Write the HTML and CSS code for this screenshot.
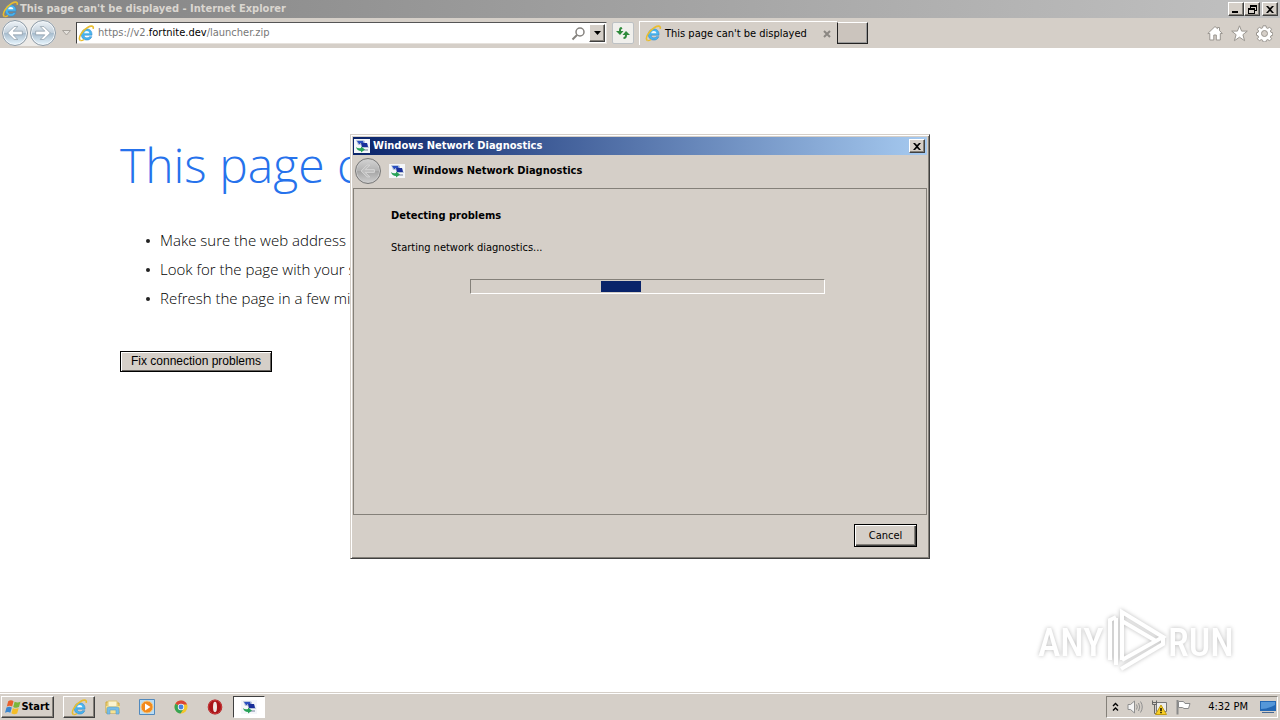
FILE: index.html
```html
<!DOCTYPE html>
<html lang="en">
<head>
    <meta charset="UTF-8">
    <meta name="viewport" content="width=device-width, initial-scale=1.0">
    <title>This page can't be displayed</title>
    <link rel="stylesheet" href="styles.css">
</head>
<body>
    <!-- Shared icons -->
    <svg class="sprite" aria-hidden="true">
        <symbol id="ie" viewBox="0 0 16 16">
            <path d="M13.2 9.6H5.7c.2 1.7 1.3 2.5 2.7 2.5 1.100 0 1.800-.4 2.300-1.100h2.300c-.8 2-2.500 3.200-4.700 3.200-3.200 0-5.200-2.200-5.200-5.200s2.100-5.300 5.200-5.300c3.300 0 5.100 2.300 4.900 5.900z" fill="#49b4ee" stroke="#2c86cc" stroke-width=".5"/>
            <path d="M5.800 7.800h4.900c-.2-1.400-1.100-2.100-2.400-2.100S6.100 6.400 5.800 7.800z" fill="#f3fbff"/>
            <path d="M2.300 14.600C-.6 12.800 3.800 5.200 9 2.300c3.300-1.900 6-1.800 5.300 1.300" fill="none" stroke="#e9bd2f" stroke-width="1.500"/>
            <path d="M2.300 14.600c1 .4 2.300-.2 3.400-1" fill="none" stroke="#e9bd2f" stroke-width="1.200"/>
        </symbol>
        <symbol id="net" viewBox="0 0 16 14">
            <path d="M0 0h16v14H0z" fill="#f4f6fa"/>
            <path d="M2 1h7l2 1v4H4z" fill="#b9c6dc"/>
            <path d="M3 2h6l1 3H5z" fill="#2a4fc0"/>
            <path d="M6 4h7l2 5H8z" fill="#b8c4d8"/>
            <path d="M7 4h6l1 4H8z" fill="#1a2f9a"/>
            <path d="M9 10h5v2H9z" fill="#b3bccb"/>
            <path d="M2 8q2 2 5 1V7.500l4 3-4 3V12Q3 12 2 8z" fill="#27a257"/>
        </symbol>
        <symbol id="cross" viewBox="0 0 8 7">
            <path d="M0 0h2l2 2 2-2h2L5 3.500 8 7H6L4 5 2 7H0l3-3.500z" fill="currentColor"/>
        </symbol>
    </svg>

    <header class="titlebar">
        <svg class="icon"><use href="#ie"/></svg>
        <span class="titlebar-text">This page can't be displayed - Internet Explorer</span>
        <div class="window-buttons">
            <button class="win-btn" aria-label="Minimize"><svg width="8" height="7"><path d="M0 5h6v2H0z"/></svg></button>
            <button class="win-btn" aria-label="Restore"><svg width="9" height="9"><path d="M2 0h7v6H7V5h1V2H3v1H2zM0 3h7v6H0zm1 2v3h5V5z" fill-rule="evenodd"/></svg></button>
            <button class="win-btn close" aria-label="Close"><svg width="8" height="7"><use href="#cross"/></svg></button>
        </div>
    </header>

    <nav class="toolbar">
        <div class="history">
            <button class="round" aria-label="Back"><svg viewBox="0 0 24 24"><path d="M11 5 4 12l7 7h4l-5-5h10v-4H10l5-5z" fill="#fff" stroke="#8a99a6" stroke-width=".8"/></svg></button>
            <button class="round" aria-label="Forward"><svg viewBox="0 0 24 24"><path d="M13 5l7 7-7 7H9l5-5H4v-4h10L9 5z" fill="#fff" stroke="#8a99a6" stroke-width=".8"/></svg></button>
        </div>
        <button class="plain recent" aria-label="Recent pages"><svg width="9" height="6"><path d="M.5.5h8l-4 4.500z" fill="#e4e1dc" stroke="#a5a19b"/></svg></button>
        <div class="address">
            <svg class="icon"><use href="#ie"/></svg>
            <a class="url" href="#">https://v2.<b>fortnite.dev</b>/launcher.zip</a>
            <button class="plain" aria-label="Search"><svg width="15" height="15"><circle cx="9" cy="6" r="4" fill="none" stroke="#85827e" stroke-width="1.500"/><path d="M6 9l-4.500 4.500" stroke="#85827e" stroke-width="2"/></svg></button>
            <button class="win-btn drop" aria-label="Show addresses"><svg width="7" height="4"><path d="M0 0h7L3.500 4z"/></svg></button>
        </div>
        <button class="refresh" aria-label="Refresh"><svg width="16" height="16"><path d="M6.500 2C4.500 2 4 3.500 4 6H1l4 4 3.500-4H6c0-1.500 0-2 1.500-2zM8.500 14c2.500 0 3.500-1.500 3.500-4h3l-4-4-3.500 4H10c0 1.500-.5 2-1.500 2z" fill="#2f8a3c"/></svg></button>
        <div class="tab">
            <svg class="icon"><use href="#ie"/></svg>
            <span class="tab-text">This page can't be displayed</span>
            <button class="plain tab-close" aria-label="Close tab"><svg width="8" height="8"><path d="M1 1l6 6M7 1L1 7" stroke="currentColor" stroke-width="2"/></svg></button>
        </div>
        <button class="new-tab" aria-label="New tab"></button>
        <div class="tools">
            <button class="plain" aria-label="Home"><svg width="16" height="16"><path d="M8 1.500.8 8.500h2V15h4v-5h2.500v5h4V8.500h2L12.500 5.500V2.500h-2v1.200z" fill="#fff" stroke="#99958f"/></svg></button>
            <button class="plain" aria-label="Favorites"><svg width="17" height="17"><path d="M8.500.8l2.100 5.300h5.700l-4.400 3.600 1.700 6-5.100-3.500-5.100 3.500 1.700-6L.7 6.100h5.700z" fill="#fff" stroke="#99958f"/></svg></button>
            <button class="plain" aria-label="Tools"><svg width="17" height="17" viewBox="0 0 17 17"><path d="M7 .8h3l.4 2 1.400.6 1.800-1.200 2 2-1.200 1.800.6 1.400 1.700.3v2.600l-1.700.4-.6 1.400 1.200 1.700-2 2-1.800-1.200-1.400.6-.4 1.700H7l-.4-1.700-1.400-.6-1.800 1.200-2-2 1.200-1.700-.6-1.400-1.500-.4V7.700L2 7.400 2.600 6 1.400 4.200l2-2 1.800 1.200 1.400-.6z" fill="#fff" stroke="#99958f"/><circle cx="8.500" cy="8.500" r="3" fill="#d5cfc8" stroke="#99958f"/></svg></button>
        </div>
    </nav>

    <main class="page">
        <h1>This page can't be displayed</h1>
        <ul>
            <li>Make sure the web address https://v2.fortnite.dev is correct.</li>
            <li>Look for the page with your search engine.</li>
            <li>Refresh the page in a few minutes.</li>
        </ul>
        <button class="fix">Fix connection problems</button>
    </main>

    <svg class="watermark" viewBox="0 0 200 64" aria-label="ANY RUN">
        <g class="mark">
            <text x="0" y="48">ANY</text>
            <text x="130" y="48">RUN</text>
            <path d="M72 52V12l6-3M84 52V4l41 25-41 23M84 13l34 20M78 57V10M83 61l42-25v-6"/>
        </g>
    </svg>

    <!-- Diagnostics dialog -->
    <section class="dialog" role="dialog" aria-label="Windows Network Diagnostics">
        <div class="dialog-title">
            <svg class="net"><use href="#net"/></svg>
            <span>Windows Network Diagnostics</span>
            <button class="win-btn close" aria-label="Close"><svg width="8" height="7"><use href="#cross"/></svg></button>
        </div>
        <div class="dialog-head">
            <button class="round gray" aria-label="Back" disabled><svg viewBox="0 0 24 24"><path d="M11 5.500 4.500 12l6.500 6.500h3l-5-5h10v-3H9l5-5z" fill="#bdbdbd" stroke="#d6d6d6"/></svg></button>
            <svg class="net"><use href="#net"/></svg>
            <span>Windows Network Diagnostics</span>
        </div>
        <div class="dialog-body">
            <h2>Detecting problems</h2>
            <p>Starting network diagnostics...</p>
            <div class="progress" role="progressbar" aria-label="Progress"><div class="chunk"></div></div>
        </div>
        <div class="dialog-foot">
            <button class="cancel">Cancel</button>
        </div>
    </section>

    <footer class="taskbar">
        <button class="start">
            <svg width="16" height="16" viewBox="0 0 15 15"><path d="M3 2c2-1.300 3.500-1 5 0L6.700 7C5 6 3.700 6 1.700 7z" fill="#e8602c"/><path d="M9 2.500c2 1 3.500 1 5.500 0l-1.400 5c-2 1-3.600.9-5.400-.1z" fill="#7ab63c"/><path d="M1.400 8c2-1.200 3.500-1 5 0L5 13c-1.600-1-3-1-5 0z" fill="#3a86d0"/><path d="M7.400 8.400c1.800 1.100 3.500 1 5.400.1l-1.400 5c-2 1-3.600.9-5.400-.1z" fill="#f4bd27"/></svg>
            <span>Start</span>
        </button>
        <button class="task raised" aria-label="Internet Explorer"><svg class="icon"><use href="#ie"/></svg></button>
        <button class="task" aria-label="Explorer"><svg width="16" height="16"><path d="M1 3h5l1 1h7v10H1z" fill="#f0d478" stroke="#cda83d"/><path d="M3 2h9v6H3z" fill="#fbf4cf" stroke="#ddc677"/><path d="M1 7h14l-1 7H2z" fill="#f6e291"/><path d="M2 15V9.500Q2 8 4 8h8q2 0 2 1.500V15h-3v-4H5v4z" fill="#75bde6" stroke="#5b9fca" stroke-width=".6"/></svg></button>
        <button class="task" aria-label="Media Player"><svg width="16" height="16"><path d="M.5.5h15v15H.5z" fill="#b9dcf4" stroke="#5189bd"/><circle cx="8" cy="8" r="6" fill="#f28a1c" stroke="#f8c77c"/><path d="M6 4.500v7L11.500 8z" fill="#fff"/></svg></button>
        <button class="task" aria-label="Chrome"><svg width="16" height="16"><circle cx="8" cy="8" r="6.500" fill="#f4c62b"/><path d="M8 8 2.400 4.700A6.500 6.500 0 0 1 14 5.500H8z" fill="#da4437"/><path d="M8 8 2.400 4.700A6.500 6.500 0 0 0 7.500 14.500l3-4.500z" fill="#36a455"/><circle cx="8" cy="8" r="3.200" fill="#f5f5f5"/><circle cx="8" cy="8" r="2.400" fill="#4781df"/></svg></button>
        <button class="task" aria-label="Opera"><svg width="16" height="16"><ellipse cx="8" cy="8" rx="7.300" ry="7.500" fill="#a81418"/><ellipse cx="8" cy="8" rx="6.500" ry="6.800" fill="none" stroke="#d04545" stroke-width=".8"/><ellipse cx="8" cy="8" rx="2" ry="5.200" fill="#efe7e3"/></svg></button>
        <button class="task pressed" aria-label="Windows Network Diagnostics"><svg class="net"><use href="#net"/></svg></button>

        <div class="tray">
            <svg width="7" height="10"><path d="M1 4l2.500-2.500L6 4M1 8.500L3.500 6 6 8.500" fill="none" stroke="#000" stroke-width="1.400"/></svg>
            <svg width="16" height="16"><path d="M1 5.500h2.500L7.500 2v12l-4-3.500H1z" fill="#f5f5f5" stroke="#8f8f8f"/><path d="M9.500 5.500q1.500 2.500 0 5M11.500 4q2.500 4 0 8M13.500 2.500q3.500 5.500 0 11" fill="none" stroke="#8f8f8f"/></svg>
            <svg width="16" height="16"><path d="M5.500 3.500h10v9h-10z" fill="#ececec" stroke="#777"/><path d="M1.500 1.500v4h4v-4M3.500 5.500v9M1.500 3.500h4M3.500 14.500h5" fill="none" stroke="#666"/><path d="M10 6l5.500 9.500h-11z" fill="#f8cf25" stroke="#c39a10"/><path d="M9.300 9h1.400v3.200H9.300zm0 4h1.400v1.300H9.300z"/></svg>
            <svg width="16" height="16"><path d="M2.500 1v14.500" stroke="#8a8a8a" stroke-width="2"/><path d="M3.500 2.500h5l1.500 2h5l-1.500 5H9l-1.500-1h-4z" fill="#fff" stroke="#8a8a8a"/></svg>
            <span class="clock">4:32 PM</span>
            <svg width="16" height="14"><path d="M0 1h16v10H0z" fill="#2367b4"/><path d="M1 2h14v3Q7 9 1 9z" fill="#5597d9"/><path d="M2 12h12v1H2z" fill="#466792"/></svg>
        </div>
    </footer>
</body>
</html>
```
FILE: styles.css
```css
* {
    box-sizing: border-box;
}

body {
    margin: 0;
    min-height: 100vh;
    display: flex;
    flex-direction: column;
    background: #fff;
    color: #000;
    font: 11px/14px Tahoma, "DejaVu Sans Condensed", sans-serif;
    overflow: hidden;
    position: relative;
}

button {
    font: inherit;
    color: #000;
    padding: 0;
    display: flex;
    align-items: center;
    justify-content: center;
}

svg {
    flex: none;
    display: block;
}

.sprite {
    position: absolute;
    width: 0;
    height: 0;
}

.icon {
    width: 17px;
    height: 17px;
}

.net {
    width: 16px;
    height: 14px;
}

/* Classic raised button */
.win-btn {
    width: 16px;
    height: 14px;
    background: #d5cfc8;
    border: 1px solid;
    border-color: #fff #404040 #404040 #fff;
    box-shadow: inset -1px -1px #848079;
}

.plain {
    background: none;
    border: 0;
}

/* Browser title */
.titlebar {
    height: 18px;
    display: flex;
    align-items: center;
    gap: 1px;
    padding: 0 2px;
    background: linear-gradient(to right, #828282, #c1c1c1);
    color: #dad6d0;
    font-weight: bold;
}

.titlebar-text {
    flex: 1;
}

.window-buttons {
    display: flex;
}

.close {
    margin-left: 2px;
}

/* Toolbar */
.toolbar {
    height: 30px;
    display: flex;
    align-items: center;
    padding: 0 7px 0 2px;
    background: #d5cfc8;
}

.history {
    display: flex;
    gap: 2px;
    border-radius: 14px;
    background: #eceae7;
}

.round {
    width: 26px;
    height: 26px;
    border: 1px solid #8d9aa5;
    border-radius: 50%;
    background: linear-gradient(#eef3f7, #c1cfdb 50%, #a7bccd 52%, #e9f7ff);
    box-shadow: inset 0 0 0 1px #f3f7fa;
}

.round svg {
    width: 22px;
    height: 22px;
}

.gray {
    border-color: #777;
    background: linear-gradient(#d3d3d3, #b2b2b2 50%, #a5a5a5 52%, #cfcfcf);
    box-shadow: inset 0 0 0 1px #ccc;
}

.recent {
    width: 20px;
    height: 20px;
}

.address {
    width: 531px;
    height: 22px;
    display: flex;
    align-items: center;
    gap: 3px;
    padding: 1px;
    background: #fff;
    border: 1px solid;
    border-color: #555 #e6e2dd #e6e2dd #404040;
}

.url {
    flex: 1;
    color: #777;
    text-decoration: none;
}

.url b {
    color: #000;
    font-weight: normal;
}

.drop {
    height: 18px;
}

.refresh {
    width: 22px;
    height: 22px;
    margin: 0 5px;
    background: #f0efec;
    border: 1px solid #bdc1c4;
    border-radius: 2px;
}

.tab {
    width: 198px;
    height: 24px;
    display: flex;
    align-items: center;
    gap: 3px;
    padding: 0 6px 0 5px;
    border-top: 1px solid #fff;
    border-left: 1px solid #fff;
}

.tab-text {
    flex: 1;
}

.tab-close {
    color: #8b8782;
}

.new-tab {
    width: 31px;
    height: 22px;
    background: #cbc4bd;
    border: 1px solid;
    border-color: #fff #222 #222 #222;
    box-shadow: inset -1px -1px #999;
}

.tools {
    margin-left: auto;
    display: flex;
    gap: 8px;
}

/* Error page */
.page {
    flex: 1;
    padding: 84px 120px 0;
    font-family: "Segoe UI", "Open Sans", sans-serif;
}

.page h1 {
    margin: 0;
    color: #2672ec;
    font-size: 48px;
    line-height: 66px;
    font-weight: 300;
    white-space: nowrap;
}

.page ul {
    margin: 28px 0 0;
    padding-left: 26px;
    list-style: none;
    font-size: 15px;
    line-height: 29px;
    font-weight: 300;
}

.page li {
    display: flex;
    align-items: center;
    gap: 10px;
}

.page li::before {
    content: "";
    width: 4px;
    height: 4px;
    border-radius: 50%;
    background: #222;
}

.fix {
    width: 152px;
    height: 21px;
    margin-top: 38px;
    padding-bottom: 2px;
    font: 12px/14px "Liberation Sans", Arial, sans-serif;
    background: #d5cfc8;
    border: 1px solid #000;
    box-shadow: inset 1px 1px #fff, inset -1px -1px #66625e;
}

.watermark {
    position: absolute;
    right: 42px;
    bottom: 48px;
    width: 200px;
    height: 64px;
    filter: drop-shadow(0 0 2px #bbb);
}

.mark {
    fill: #fff;
    font: 500 38px "Roboto Condensed", Roboto, sans-serif;
}

.mark path {
    fill: none;
    stroke: #fff;
    stroke-width: 4px;
}

/* Dialog */
.dialog {
    position: absolute;
    top: 134px;
    left: calc(50% - 290px);
    width: 580px;
    height: 425px;
    display: flex;
    flex-direction: column;
    padding: 2px;
    background: #d5cfc8;
    border: 1px solid;
    border-color: #d5cfc8 #404040 #404040 #d5cfc8;
    box-shadow: inset 1px 1px #fff, inset -1px -1px #848079;
}

.dialog-title {
    height: 18px;
    display: flex;
    align-items: center;
    gap: 3px;
    padding: 0 2px 0 1px;
    background: linear-gradient(to right, #0a246a, #a6caf0);
    color: #fff;
    font-weight: bold;
}

.dialog-title .close {
    margin-left: auto;
}

.dialog-head {
    height: 33px;
    display: flex;
    align-items: center;
    gap: 8px;
    padding: 0 2px 1px;
    font-weight: bold;
}

.dialog-body {
    flex: 1;
    padding: 20px 37px;
    border: 1px solid #848079;
}

.dialog-body h2 {
    margin: 0;
    font-size: 11px;
    line-height: 14px;
}

.dialog-body p {
    margin: 18px 0 24px;
}

.progress {
    width: 355px;
    height: 15px;
    margin-left: 79px;
    padding: 1px;
    border: 1px solid;
    border-color: #848079 #fff #fff #848079;
}

.chunk {
    width: 40px;
    height: 11px;
    margin-left: 129px;
    background: #0a246a;
}

.dialog-foot {
    height: 41px;
    display: flex;
    align-items: center;
    justify-content: flex-end;
    padding-right: 10px;
}

.cancel {
    width: 63px;
    height: 23px;
    background: #d5cfc8;
    border: 1px solid #000;
    box-shadow: inset 1px 1px #fff, inset -1px -1px #404040, inset -2px -2px #848079;
}

/* Taskbar */
.taskbar {
    height: 28px;
    display: flex;
    align-items: center;
    padding: 1px 2px 0 1px;
    background: #d5cfc8;
    border-top: 1px solid #d5cfc8;
    box-shadow: inset 0 1px #fff;
}

.start {
    width: 53px;
    height: 22px;
    margin-right: 9px;
    font-weight: bold;
    background: #d5cfc8;
    border: 1px solid;
    border-color: #fff #404040 #404040 #fff;
    box-shadow: inset -1px -1px #848079;
}

.task {
    width: 32px;
    height: 22px;
    margin-right: 2px;
    background: none;
    border: 1px solid transparent;
}

.raised {
    border-color: #fff #404040 #404040 #fff;
    box-shadow: inset -1px -1px #848079;
}

.pressed {
    background: #fff;
    border-color: #404040 #fff #fff #404040;
}

.tray {
    height: 22px;
    margin-left: auto;
    display: flex;
    align-items: center;
    gap: 8px;
    padding: 0 1px 0 5px;
    border: 1px solid;
    border-color: #848079 #fff #fff #848079;
}

.clock {
    margin: 0 4px 0 9px;
}
```
